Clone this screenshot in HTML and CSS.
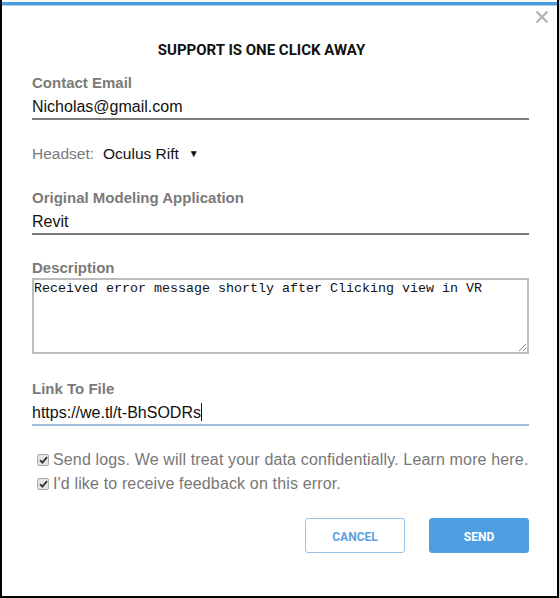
FILE: index.html
```html
<!DOCTYPE html>
<html>
<head>
<meta charset="utf-8">
<link rel="stylesheet" href="styles.css">
</head>
<body>
<div class="dialog">
  <div class="topbar"></div>
  <button class="close" aria-label="Close">
    <svg width="14" height="14" viewBox="0 0 14 14"><path d="M1.5 1.5 L12.5 12.5 M12.5 1.5 L1.5 12.5" stroke="#b5b5b5" stroke-width="2.4" fill="none"/></svg>
  </button>
  <h1 class="title">SUPPORT IS ONE CLICK AWAY</h1>
  <form class="form">
    <div class="field">
      <label class="label">Contact Email</label>
      <div class="input">Nicholas@gmail.com</div>
    </div>
    <div class="headset">
      <span class="label">Headset:</span>
      <span class="select">Oculus Rift</span>
      <span class="arrow">▼</span>
    </div>
    <div class="field">
      <label class="label">Original Modeling Application</label>
      <div class="input">Revit</div>
    </div>
    <div class="field">
      <label class="label">Description</label>
      <div class="textarea">Received error message shortly after Clicking view in VR
        <svg class="grip" width="9" height="9" viewBox="0 0 9 9"><path d="M8 1 L1 8 M8 5 L5 8" stroke="#888" stroke-width="1"/></svg>
      </div>
    </div>
    <div class="field link">
      <label class="label">Link To File</label>
      <div class="input focus">https://we.tl/t-BhSODRs<span class="caret"></span></div>
    </div>
    <div class="checks">
      <label class="check"><span class="box"><svg width="9" height="8" viewBox="0 0 9 8"><path d="M1 4.2 L3.4 6.6 L8 1.2" stroke="#333" stroke-width="1.8" fill="none"/></svg></span>Send logs. We will treat your data confidentially. Learn more here.</label>
      <label class="check"><span class="box"><svg width="9" height="8" viewBox="0 0 9 8"><path d="M1 4.2 L3.4 6.6 L8 1.2" stroke="#333" stroke-width="1.8" fill="none"/></svg></span>I'd like to receive feedback on this error.</label>
    </div>
    <div class="actions">
      <button type="button" class="btn cancel">CANCEL</button>
      <button type="button" class="btn send">SEND</button>
    </div>
  </form>
</div>
</body>
</html>
```
FILE: styles.css
```css
html, body {
  margin: 0;
  padding: 0;
  background: #fff;
}
.dialog {
  position: relative;
  box-sizing: border-box;
  width: 559px;
  height: 598px;
  margin: 0;
  padding-top: 2px;
  border-left: 2px solid #000;
  border-right: 2px solid #000;
  border-bottom: 2px solid #000;
  font-family: "Liberation Sans", Arial, sans-serif;
}
.topbar {
  height: 3px;
  background: #4a9be0;
  border-bottom: 1px solid #a9d2f5;
}
.close {
  position: absolute;
  top: 10px;
  right: 8px;
  padding: 0;
  border: 0;
  background: none;
  width: 14px;
  height: 14px;
}
.title {
  margin: 35px 0 0;
  padding-right: 36px;
  text-align: center;
  font-family: Roboto, "Liberation Sans", sans-serif;
  font-weight: 700;
  font-size: 15px;
  line-height: 18px;
  color: #111;
}
.form {
  padding: 0 28px 0 30px;
  margin-top: 15px;
  display: flex;
  flex-direction: column;
}
.label {
  color: #7a7a7a;
  font-weight: 700;
  font-size: 15px;
  line-height: 18px;
}
.field {
  display: flex;
  flex-direction: column;
}
.input {
  font-size: 16px;
  line-height: 20px;
  color: #111;
  padding: 5px 0 1px 0;
  border-bottom: 2px solid #7b7b7b;
}
.input.focus {
  border-bottom-color: #9bbcdb;
}
.caret {
  display: inline-block;
  width: 1px;
  height: 18px;
  background: #111;
  vertical-align: -3px;
}
.headset {
  margin: 25px 0 26px;
  display: flex;
  align-items: center;
  line-height: 18px;
}
.headset .label {
  font-weight: 400;
  font-size: 15.5px;
}
.select {
  margin-left: 9px;
  color: #111;
  font-size: 15.5px;
}
.arrow {
  margin-left: 10px;
  font-size: 10px;
  color: #111;
}
.field + .field {
  margin-top: 24px;
}
.field.link {
  margin-top: 26px;
}
.textarea {
  position: relative;
  margin-top: 1px;
  height: 70px;
  border: 2px solid #bcbcbc;
  padding: 1px 0;
  font-family: "Liberation Mono", "Courier New", monospace;
  font-size: 13.33px;
  line-height: 16px;
  color: #111;
}
.grip {
  position: absolute;
  right: 0;
  bottom: 0;
}
.checks {
  margin-top: 25px;
  padding-left: 5px;
  display: flex;
  flex-direction: column;
  gap: 6px;
}
.check {
  display: flex;
  align-items: center;
  color: #777;
  font-size: 16px;
  letter-spacing: 0.15px;
  line-height: 18px;
}
.box {
  box-sizing: border-box;
  width: 12px;
  height: 12px;
  border: 1px solid #aaa;
  border-radius: 2px;
  background: #e6e6e6;
  margin-right: 4px;
  display: flex;
  align-items: center;
  justify-content: center;
}
.actions {
  margin-top: 25px;
  display: flex;
  justify-content: flex-end;
  gap: 24px;
}
.btn {
  box-sizing: border-box;
  width: 100px;
  height: 35px;
  border-radius: 3px;
  font-family: Roboto, "Liberation Sans", sans-serif;
  font-weight: 700;
  font-size: 12px;
  padding: 2px 0 0;
}
.cancel {
  background: #fff;
  border: 1.5px solid #93c4ee;
  color: #5aa2e2;
}
.send {
  background: #4e9fe2;
  border: 1px solid #4e9fe2;
  color: #fff;
}
```
